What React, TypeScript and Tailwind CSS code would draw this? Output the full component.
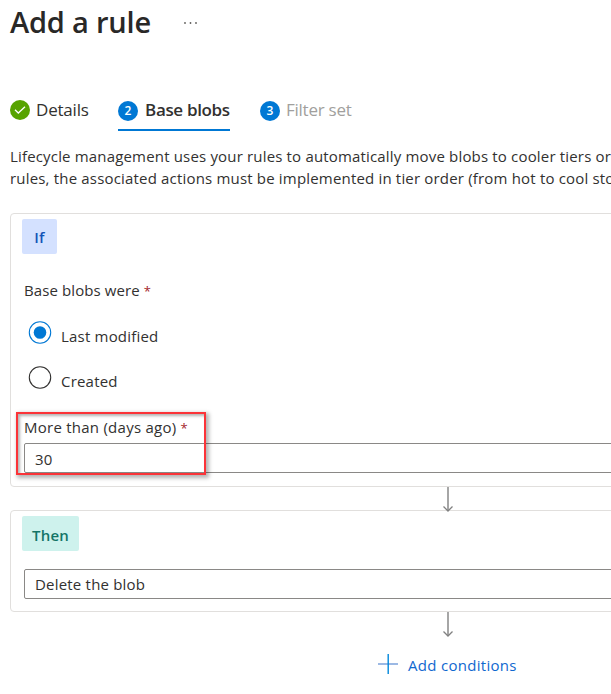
import type { ReactNode } from "react";

function StepBadge({ children }: { children: ReactNode }) {
  return (
    <span className="mt-px flex h-5 w-5 shrink-0 items-center justify-center rounded-full bg-[#0078d4] text-[12px] leading-none font-semibold text-white">
      {children}
    </span>
  );
}

function Steps() {
  return (
    <nav className="mt-[56px] flex h-[31px] items-start text-[17px] leading-5 tracking-normal whitespace-nowrap">
      <div className="flex w-[108px] gap-[6px]">
        <svg className="h-5 w-5 shrink-0" viewBox="0 0 20 20" fill="none">
          <circle cx="10" cy="10" r="10" fill="#57a300" />
          <path d="M5 9.8l3.3 3.2 6.7-6.3" stroke="#fff" strokeWidth="1.3" />
        </svg>
        <span className="tracking-[-0.2px]">Details</span>
      </div>
      <div className="flex h-[31px] w-[112px] gap-[7px] border-b-2 border-[#0078d4] font-semibold">
        <StepBadge>2</StepBadge>
        <span className="tracking-[-0.33px]">Base blobs</span>
      </div>
      <div className="ml-[30px] flex gap-[6px] text-[#a19f9d]">
        <StepBadge>3</StepBadge>
        <span className="tracking-[-0.25px]">Filter set</span>
      </div>
    </nav>
  );
}

function Radio({ label, checked = false }: { label: string; checked?: boolean }) {
  return (
    <label className="flex h-[45px] items-start gap-[9px]">
      <svg className="h-6 w-6 shrink-0" viewBox="0 0 24 24" fill="none">
        <circle cx="12" cy="12.5" r="10.7" stroke={checked ? "#0078d4" : "#323130"} strokeWidth="1.1" />
        {checked && <circle cx="12" cy="12.5" r="6.3" fill="#0078d4" />}
      </svg>
      <span className="mt-[5px] leading-[22px]">{label}</span>
    </label>
  );
}

function Required() {
  return <span className="text-[13px] leading-none text-[#a4262c]">*</span>;
}

function DownArrow() {
  return (
    <div className="relative z-10 ml-[432px] h-[23px] w-3">
      <svg className="h-[25px] w-3" viewBox="0 0 12 25" fill="none">
        <path d="M6 0v23" stroke="#a6a6a6" strokeWidth="2" />
        <path d="M1.5 19.5L6 24l4.5-4.5" stroke="#808080" strokeWidth="1.3" />
      </svg>
    </div>
  );
}

export default function App() {
  return (
    <main className="h-[694px] w-[611px] overflow-hidden bg-white pl-[10px] font-['Open_Sans','Noto_Sans',sans-serif] text-[15px] tracking-[0.2px] text-[#323130]">
      <header className="flex h-[44px] items-start">
        <h1 className="w-[173px] text-[29px] leading-[43px] font-semibold tracking-[-0.2px] whitespace-nowrap text-[#292827]">Add a rule</h1>
        <svg className="mt-[21px] h-1 w-[15px]" viewBox="0 0 15 4" fill="#605e5c">
          <circle cx="2" cy="2" r="0.9" />
          <circle cx="7.5" cy="2" r="0.9" />
          <circle cx="13" cy="2" r="0.9" />
        </svg>
      </header>
      <Steps />
      <p className="mt-[14px] leading-[22px] tracking-[0.17px] whitespace-nowrap">
        Lifecycle management uses your rules to automatically move blobs to cooler tiers or
        <br />
        <span className="tracking-[0.18px]">rules, the associated actions must be implemented in tier order (from hot to cool sto</span>
      </p>
      <section className="mt-[24px] h-[274px] w-[700px] rounded-[4px] border border-[#e1dfdd] pt-[5px] pl-[11px]">
        <div className="flex h-[35px] w-[35px] items-center justify-center rounded-[2px] bg-[#d4e1ff] pt-0.5 font-semibold text-[#1354b8]">If</div>
        <div className="mt-[25px] ml-[2px] h-[22px] leading-[22px] tracking-[0.1px]">
          Base blobs were <Required />
        </div>
        <div className="mt-[19px] ml-[6px]">
          <Radio label="Last modified" checked />
          <Radio label="Created" />
        </div>
        <div className="relative ml-[2px] pt-[6px]">
          <div className="pointer-events-none absolute top-[2px] left-[-8px] h-[63px] w-[190px] border-2 border-[#fb3338] shadow-[2px_2px_4px_1px_rgba(0,0,0,0.3),inset_2px_2px_3px_rgba(0,0,0,0.3)]" />
          <div className="h-[22px] leading-[22px] tracking-[0.25px]">
            More than (days ago) <Required />
          </div>
          <div className="mt-[5px] h-[30px] rounded-[2px] border border-[#8a8886] pt-[4px] pl-[10px] leading-[22px]">30</div>
        </div>
      </section>
      <DownArrow />
      <section className="h-[102px] w-[700px] rounded-[4px] border border-[#e1dfdd] pt-[5px] pl-[11px]">
        <div className="flex h-[35px] w-[57px] items-center justify-center rounded-[2px] bg-[#cef2ed] pt-1 font-semibold text-[#147567]">Then</div>
        <div className="mt-[18px] ml-[2px] h-[30px] rounded-[2px] border border-[#8a8886] pt-[3px] pl-[10px] leading-[22px]">Delete the blob</div>
      </section>
      <DownArrow />
      <button className="mt-[19px] ml-[368px] flex items-start gap-[10px] text-[#1068cf]">
        <svg className="h-5 w-5" viewBox="0 0 20 20" fill="none">
          <path d="M0 10h20" stroke="#719bd8" strokeWidth="1.4" />
          <path d="M10.2 0v20" stroke="#0087dc" strokeWidth="1.4" />
        </svg>
        <span className="leading-[22px] tracking-[0.3px] whitespace-nowrap">Add conditions</span>
      </button>
    </main>
  );
}
